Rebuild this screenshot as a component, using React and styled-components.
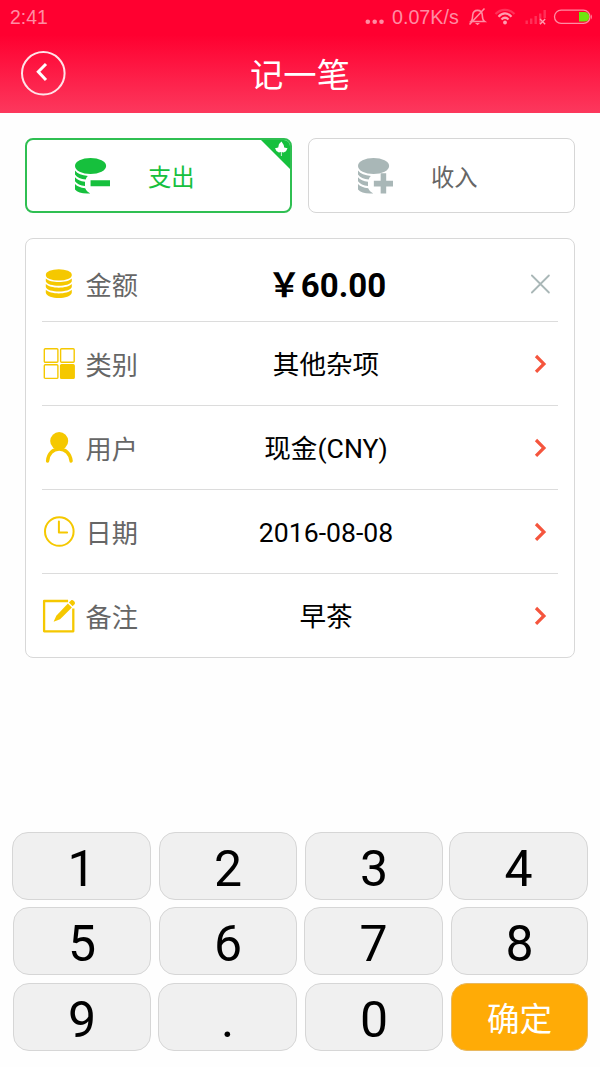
import React, { useState } from 'react';
import styled, { createGlobalStyle } from 'styled-components';

const GlobalStyle = createGlobalStyle`
    * {
        box-sizing: border-box;
    }

    body {
        margin: 0;
        background: #fefefe;
        font-family: Roboto, "Noto Sans CJK SC", sans-serif;
    }

    button {
        font-family: inherit;
        padding: 0;
        margin: 0;
    }

    svg {
        display: block;
        flex: none;
    }
`;

const Page = styled.div`
    width: 600px;
    height: 1067px;
    display: flex;
    flex-direction: column;
    overflow: hidden;
    background: #fefefe;
`;

const Header = styled.header`
    height: 113px;
    flex: none;
    background: linear-gradient(#ff0030 0, #ff0030 35px, #fc385d 113px);
`;

const StatusBar = styled.div`
    height: 34px;
    padding: 0 7px 0 10px;
    display: flex;
    align-items: center;
    justify-content: space-between;
    color: #ff8ca3;
    font-family: "Liberation Sans", Arial, sans-serif;
    font-size: 19.4px;
    line-height: 34px;
`;

const TitleBar = styled.div`
    height: 79px;
    padding: 0 20px;
    display: grid;
    grid-template-columns: 46px 1fr 46px;
    align-items: center;
`;

const BackButton = styled.button`
    width: 46px;
    height: 46px;
    border: 0;
    background: none;
`;

const Title = styled.h1`
    margin: 0;
    padding-top: 5px;
    text-align: center;
    color: #fff;
    font-size: 33.3px;
    font-weight: 400;
    line-height: 74px;
`;

const Tabs = styled.div`
    display: grid;
    grid-template-columns: 267px 267px;
    column-gap: 16px;
    padding: 25px 25px 0;
`;

const Tab = styled.button`
    position: relative;
    height: 75px;
    display: flex;
    align-items: center;
    padding-left: ${(props) => (props.$active ? '48px' : '49px')};
    border: ${(props) => (props.$active ? '2px solid #2fbf52' : '1px solid #d6d6d6')};
    border-radius: 8px;
    background: #fff;
    color: ${(props) => (props.$active ? '#16c03d' : '#666')};
    font-size: 23.3px;
    overflow: hidden;

    span {
        margin-left: 38px;
        padding-top: 4px;
        line-height: 36px;
    }
`;

const Corner = styled.svg`
    position: absolute;
    top: -2px;
    right: -2px;
`;

const Card = styled.section`
    margin: 25px 25px 0;
    padding: 0 16px;
    height: 420px;
    border: 1px solid #d8d8d8;
    border-radius: 8px;
    background: #fff;
`;

const Row = styled.div`
    height: ${(props) => (props.$first ? '83px' : '84px')};
    padding-top: ${(props) => (props.$first ? '7px' : '0')};
    display: grid;
    grid-template-columns: 34px 70px 1fr 36px;
    align-items: center;
    border-bottom: 1px solid #dcdcdc;

    &:last-child {
        border-bottom: 0;
    }
`;

const Label = styled.span`
    padding: 4px 0 0 9.5px;
    white-space: nowrap;
    color: #666;
    font-size: 26.2px;
    line-height: 40px;
`;

const Value = styled.span`
    padding: ${(props) => (props.$bold ? '4px' : '2px')} ${(props) => (props.$bold ? '14px' : '16px')} 0 0;
    text-align: center;
    color: #000;
    font-size: ${(props) => (props.$bold ? '33px' : '26.6px')};
    font-weight: ${(props) => (props.$bold ? 700 : 400)};
    line-height: 40px;
`;

const Keypad = styled.div`
    margin: auto 11px 17px;
    display: flex;
    flex-direction: column;
    gap: 8px;
`;

const KeyRow = styled.div`
    height: 67.5px;
    display: grid;
    grid-template-columns: ${(props) => props.$columns};
    justify-content: end;
`;

const Key = styled.button`
    grid-column: ${(props) => props.$index * 2 + 1};
    border: 1px solid ${(props) => (props.$confirm ? '#e8b860' : '#d6d6d6')};
    border-radius: 16px;
    background: ${(props) => (props.$confirm ? '#ffab06' : '#f0f0f0')};
    color: ${(props) => (props.$confirm ? '#fff' : '#000')};
    font-size: ${(props) => (props.$confirm ? '32.6px' : '50px')};
    line-height: 60px;
    padding-top: 6px;
`;

const StatusIcons = () => (
    <svg width="228" height="34" viewBox="365 0 228 34" fill="none">
        <g fill="#ff8ca3">
            <circle cx="367.8" cy="21.8" r="2.3" />
            <circle cx="374.7" cy="21.8" r="2.3" />
            <circle cx="381.5" cy="21.8" r="2.3" />
        </g>
        <text x="392" y="24" fill="#ff8ca3" fontSize="19.7" fontFamily="Liberation Sans, Arial, sans-serif">0.07K/s</text>
        {/* muted bell */}
        <path d="M471 21.500c1.800-1.500 1.500-4 1.700-6.300c.3-3 2-4.800 4.800-4.800s4.600 1.800 4.800 4.800c.2 2.300-.1 4.800 2.200 6.300zM469.500 24.500L484.500 8.500" stroke="#ff8ca3" strokeWidth="1.600" />
        <path d="M475 23h5l-2.500 2.200z" fill="#ff8ca3" />
        {/* wifi */}
        <path d="M495.500 14C501 8.500 509 8.500 514.500 14" stroke="#ff3059" strokeWidth="2.200" />
        <path d="M498.500 16.700C502.500 12.300 507.500 12.300 511.500 16.700M501.500 19.500C503.700 17.300 506.300 17.300 508.500 19.500" stroke="#ff9db0" strokeWidth="2.200" />
        <circle cx="505" cy="22.500" r="1.900" fill="#ff9db0" />
        {/* signal */}
        <path d="M526.700 24V20.500M531.200 24V18.500M535.700 24V16M540.200 24V13.500M544.700 18V10" stroke="#ff3059" strokeWidth="2.400" />
        <path d="M540 19l5.200 5.200M545.200 19l-5.200 5.200" stroke="#ff9db0" strokeWidth="1.300" />
        {/* battery */}
        <rect x="554.500" y="10.200" width="35.500" height="13.200" rx="6.600" stroke="#ff8ca3" strokeWidth="1.300" />
        <path d="M579 12h5.500a4.800 4.800 0 0 1 0 9.600H579z" fill="#6ee60e" />
        <path d="M591 14.200c1.200 1.500 1.200 3.700 0 5.200z" fill="#ff8ca3" />
    </svg>
);

const StackIcon = ({ color, plus }) => (
    <svg width="35" height="36" viewBox="0 0 36 36" preserveAspectRatio="none" fill={color}>
        <ellipse cx="16" cy="8" rx="16" ry="8" />
        <path d="M0 12.500c2.500 3.400 7 5 13.300 5.400c-1.300 1-2 2.200-2.300 3.700C6 21 2 19.500 0 16.500z" />
        <path d="M0 19.300c2.300 2.700 5.500 4 10.300 4.400v4.400C5.500 27.700 2 26 0 23.300z" />
        <path d="M0 26c2.500 2.500 5.500 3.700 10.500 4.200c1 2.200 2.500 3.800 5.200 5.200C8 36 2.500 34.500 0 31.500z" />
        {plus
            ? <path d="M23.300 15.200h5.700v7.500h7v5.700h-7v7h-5.700v-7h-7v-5.700h7z" />
            : <path d="M16 22.300h20v6H16z" />}
    </svg>
);

const ROW_ICONS = {
    coins: (
        <g fill="#f5c800">
            <ellipse cx="17.200" cy="8.900" rx="13" ry="5.700" />
            <path d="M4.200 12.500c4.500 4.800 21.500 4.800 26 0v2.800c-1.500 6-24.500 6-26 0z" />
            <path d="M4.200 18.100c4.500 4.800 21.500 4.800 26 0v2.800c-1.500 6-24.500 6-26 0z" />
            <path d="M4.200 23.800c4.500 4.800 21.500 4.800 26 0v3c-1.500 7-24.500 7-26 0z" />
        </g>
    ),
    grid: (
        <g stroke="#f5c800" strokeWidth="1.400">
            <rect x="2.700" y="2.700" width="13.600" height="13.600" rx="1" fill="none" />
            <rect x="19" y="2.700" width="13.600" height="13.600" rx="1" fill="none" />
            <rect x="2.700" y="18.800" width="13.600" height="13.600" rx="1" fill="none" />
            <rect x="19" y="18.800" width="13.600" height="13.600" rx="1" fill="#f5c800" />
        </g>
    ),
    user: (
        <g>
            <circle cx="17.600" cy="11" r="9" fill="#f5c800" />
            <path d="M6 31C6.500 23.500 11.500 19 17.600 19S28.700 23.500 29.500 31" fill="none" stroke="#f5c800" strokeWidth="3.400" strokeLinecap="round" />
        </g>
    ),
    clock: (
        <g fill="none" stroke="#f5c800" strokeWidth="2">
            <circle cx="17.700" cy="17.500" r="14.300" />
            <path d="M17.300 7.500V18.500H25.500" strokeLinecap="round" strokeLinejoin="round" />
        </g>
    ),
    note: (
        <g fill="#f5c800">
            <path d="M26.500 2H2.500V32.300H31.700V9.500" fill="none" stroke="#f5c800" strokeWidth="2.300" strokeLinejoin="round" />
            <path d="M12 22.800l2.700-6L26.300 4.500l4 4L18.500 20.200z" />
            <path d="M27.300 3.500l2.300-2.300c1.500-.8 4.500 2 3.600 3.700l-2.200 2.300z" />
        </g>
    ),
};

const ROWS = [
    { id: 'coins', label: '金额', value: '￥60.00', bold: true },
    { id: 'grid', label: '类别', value: '其他杂项' },
    { id: 'user', label: '用户', value: '现金(CNY)' },
    { id: 'clock', label: '日期', value: '2016-08-08' },
    { id: 'note', label: '备注', value: '早茶' },
];

const KEY_ROWS = [
    { keys: ['1', '2', '3', '4'], columns: '139px 8px 138px 8px 138px 6px 139px 1px' },
    { keys: ['5', '6', '7', '8'], columns: '138px 8px 138px 7px 139px 8px 137px 1px' },
    { keys: ['9', '.', '0', '确定'], columns: '138px 7px 139px 8px 138px 8px 137px 1px' },
];

const App = () => {
    const [type, setType] = useState('out');

    return (
        <Page>
            <GlobalStyle />
            <Header>
                <StatusBar>
                    <span>2:41</span>
                    <StatusIcons />
                </StatusBar>
                <TitleBar>
                    <BackButton>
                        <svg width="46" height="46" viewBox="0 0 46 46" fill="none" stroke="#fff">
                            <circle cx="23.300" cy="22.300" r="21.300" strokeWidth="2" stroke="#ffe3e8" />
                            <path d="M26 13L18.300 20.800L26 29" strokeWidth="3" />
                        </svg>
                    </BackButton>
                    <Title>记一笔</Title>
                </TitleBar>
            </Header>
            <Tabs>
                <Tab $active={type === 'out'} onClick={() => setType('out')}>
                    <StackIcon color="#16c03d" />
                    <span>支出</span>
                    <Corner width="34" height="34" viewBox="0 0 34 34">
                        <path d="M1 0H34V33z" fill="#16c03d" />
                        <path d="M23.500 3.500l2.200 3.500.5 2.500 3.300.8-1.500 3-2.500 1.300-1.800-.5v4h-.8v-4l-2 .5-2.400-1.500L17 10.300l3.200-.8L21 6z" fill="#fff" />
                    </Corner>
                </Tab>
                <Tab $active={type === 'in'} onClick={() => setType('in')}>
                    <StackIcon color="#a9b7b7" plus />
                    <span>收入</span>
                </Tab>
            </Tabs>
            <Card>
                {ROWS.map((row, i) => (
                    <Row key={row.id} $first={i === 0}>
                        <svg width="35" height="35" viewBox="0.4 0 35 35">{ROW_ICONS[row.id]}</svg>
                        <Label>{row.label}</Label>
                        <Value $bold={row.bold}>{row.value}</Value>
                        {row.bold ? (
                            <svg width="36" height="36" viewBox="0 0 36 36" fill="none">
                                <path d="M9.900 9.500L26.900 26.500M26.900 9.500L9.900 26.500" stroke="#a9b7b7" strokeWidth="1.800" strokeLinecap="round" />
                            </svg>
                        ) : (
                            <svg width="36" height="36" viewBox="0 0 36 36" fill="none">
                                <path d="M14 10L21.900 17.900L14 25.800" stroke="#f5553d" strokeWidth="3.200" />
                            </svg>
                        )}
                    </Row>
                ))}
            </Card>
            <Keypad>
                {KEY_ROWS.map((row) => (
                    <KeyRow key={row.keys[0]} $columns={row.columns}>
                        {row.keys.map((k, i) => (
                            <Key key={k} $index={i} $confirm={k === '确定'}>{k}</Key>
                        ))}
                    </KeyRow>
                ))}
            </Keypad>
        </Page>
    );
};

export default App;
